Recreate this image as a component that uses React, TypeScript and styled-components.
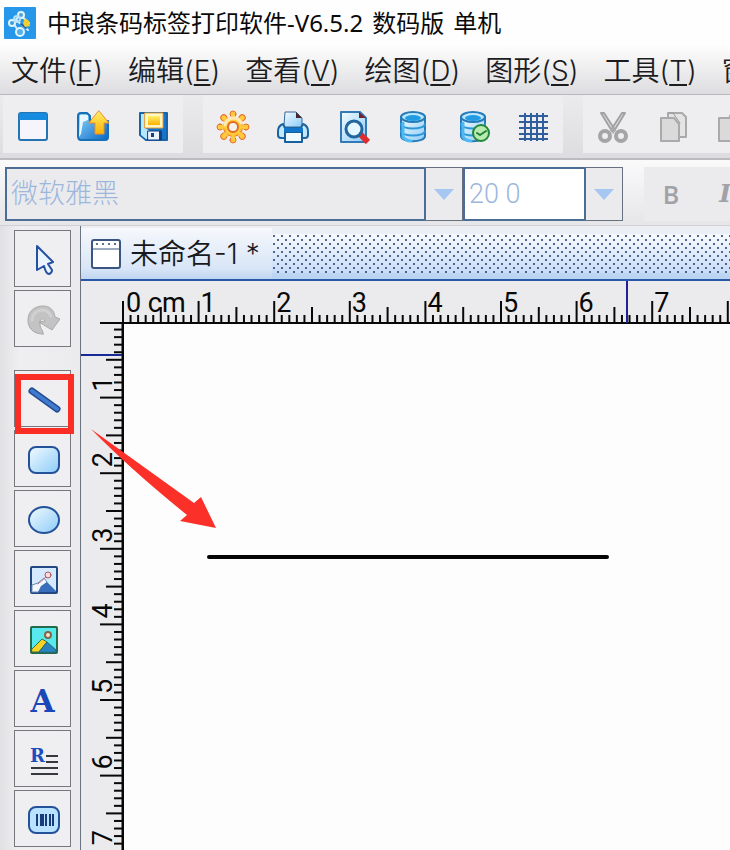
import React, { useEffect, useState } from "react";
import styled, { createGlobalStyle } from "styled-components";

const cjk = '"Noto Sans CJK SC", sans-serif';

const GlobalStyle = createGlobalStyle`
  *, *::before, *::after { box-sizing: border-box; }
  body { margin: 0; background: #ebeaec; overflow: hidden; }
  button, select { margin: 0; padding: 0; border: 0; background: none; color: inherit; font: inherit; }
  svg { display: block; }
`;

const Window = styled.div`
  display: flex;
  flex-direction: column;
  height: 100vh;
  overflow: hidden;
  color: #111;
  background: #ebeaec;
  font-family: "Liberation Sans", ${cjk};
`;

const TitleBar = styled.header`
  display: flex;
  flex: none;
  align-items: center;
  gap: 11px;
  height: 46px;
  padding: 0 0 0 4px;
  background: #fefefe;
`;

const Title = styled.h1`
  display: flex;
  gap: 9px;
  margin: 0;
  color: #0a0a0a;
  font: 400 24px/46px "Noto Sans", ${cjk};
  white-space: nowrap;
`;

const MenuBar = styled.nav`
  display: flex;
  flex: none;
  gap: 25px;
  height: 49px;
  padding-left: 11px;
  overflow: hidden;
  background: linear-gradient(#fdfdfd, #dddcdf);
  border-bottom: 1px solid #b9b9bd;
`;

const MenuButton = styled.button`
  flex: none;
  color: #1c1c1e;
  font: 350 28px/50px Inter, ${cjk};
  white-space: nowrap;
`;

const Key = styled.span`
  text-decoration: underline;
  text-decoration-thickness: 2px;
  text-underline-offset: 3px;
`;

const ToolBar = styled.div`
  display: flex;
  flex: none;
  gap: 20px;
  height: 65px;
  padding: 0 0 5px 3px;
  overflow: hidden;
  background: linear-gradient(#ebeaec, #dddde0);
  border-bottom: 2px solid #bcbcc0;
`;

const ToolGroup = styled.div`
  display: flex;
  flex: none;
  background: #eeedef;
`;

const ToolButton = styled.button`
  display: grid;
  place-items: center;
  flex: none;
  width: 60px;
  padding-top: 6px;
`;

const FormatBar = styled.div`
  display: flex;
  flex: none;
  height: 66px;
  padding: 7px 0 4px 5px;
  overflow: hidden;
  background: linear-gradient(#fafafb, #e6e6e9);
  border-bottom: 1px solid #d0d0d4;
`;

const Combo = styled.div<{ $field: number }>`
  display: grid;
  flex: none;
  grid-template-columns: ${(p) => p.$field}px 39px;
  height: 54px;
`;

const Select = styled.select<{ $fill: string }>`
  grid-area: 1 / 1 / 2 / 3;
  appearance: none;
  padding-left: 4px;
  color: #9db7dc;
  background: ${(p) => p.$fill};
  border: 2px solid #4b6d96;
  border-radius: 0;
  font: 300 27px/50px Roboto, "Noto Sans CJK SC", sans-serif;
`;

const Arrow = styled.span`
  grid-area: 1 / 2 / 2 / 3;
  display: grid;
  place-items: center;
  background: #ebebed;
  border: 1px solid #66717f;
  border-left: 2px solid #4b6d96;
  pointer-events: none;
`;

const StyleGroup = styled.div`
  display: flex;
  flex: none;
  height: 54px;
  margin-left: 21px;
  background: #ebeaec;
`;

const StyleButton = styled.button<{ $italic?: boolean }>`
  width: 54px;
  color: #a2a2a6;
  font: ${(p) => (p.$italic ? 'italic 700 25px/54px "DejaVu Serif"' : '600 25px/54px "Open Sans"')}, serif;
`;

const Workspace = styled.div`
  position: relative;
  display: flex;
  flex: 1;
  min-height: 0;
`;

const Palette = styled.aside`
  display: flex;
  flex: none;
  flex-direction: column;
  gap: 3px;
  width: 80px;
  padding: 4px 0 0 14px;
  background: linear-gradient(90deg, #e1e1e4, #efeef0 20px, #ebeaec);
`;

const PaletteButton = styled.button`
  position: relative;
  display: grid;
  place-items: center;
  flex: none;
  width: 57px;
  height: 57px;
  background: #efeef0;
  border: 1px solid #77787c;
`;

const Separator = styled.hr`
  flex: none;
  width: 57px;
  height: 17px;
  margin: 0;
  border: 0;
`;

const Highlight = styled.span`
  position: absolute;
  z-index: 1;
  top: 3px;
  left: 0;
  width: 59px;
  height: 60px;
  border: 6px solid #fa2e25;
`;

const BoldLetter = styled.span`
  padding-top: 4px;
  color: #1b48b8;
  font: 700 31px/50px "DejaVu Serif", serif;
`;

const Document = styled.main`
  display: flex;
  flex: 1;
  flex-direction: column;
  min-width: 0;
  border-left: 1px solid #6a7480;
`;

const TabStrip = styled.div`
  display: flex;
  flex: none;
  height: 55px;
  padding-top: 2px;
  background: linear-gradient(#eeeef2, #e8effb 12px, #b9d2f2);
  border-bottom: 2px solid #2858a6;
`;

const Tab = styled.button`
  display: flex;
  flex: none;
  align-items: center;
  width: 191px;
  padding-left: 9px;
  color: #18191c;
  background: linear-gradient(#f6f8fc, #d9e6f7 40px, #c0d6f3);
  font: 350 28px/50px Inter, ${cjk};
  white-space: nowrap;
`;

const TabText = styled.span`
  margin: 0 8px;
`;

const Dots = styled.div`
  flex: 1;
  margin: 6px 0 6px;
  background:
    radial-gradient(circle at 2px 2px, #4c6690 1px, transparent 1px) 0 0 / 8px 8px,
    radial-gradient(circle at 6px 6px, #4c6690 1px, transparent 1px) 0 0 / 8px 8px,
    linear-gradient(#f8fafe, #c8dcf7);
`;

const TopRuler = styled.div`
  flex: none;
  height: 43px;
  overflow: hidden;
`;

const Body = styled.div`
  display: flex;
  flex: 1;
  min-height: 0;
`;

const SideRuler = styled.div`
  flex: none;
  width: 43px;
  overflow: hidden;
`;

const Canvas = styled.div`
  position: relative;
  flex: 1;
  background: #fdfdfd;
`;

const DrawnLine = styled.svg`
  position: absolute;
  top: 231px;
  left: 83px;
`;

const Pointer = styled.svg`
  position: absolute;
  top: 201px;
  left: 90px;
  pointer-events: none;
`;

const CM = 75.6;
const rulerFont = "Roboto, sans-serif";

function useWindowSize() {
  const read = () => ({ width: window.innerWidth, height: window.innerHeight });
  const [size, setSize] = useState(read);
  useEffect(() => {
    const update = () => setSize(read());
    window.addEventListener("resize", update);
    return () => window.removeEventListener("resize", update);
  }, []);
  return size;
}

const range = (count: number) => Array.from({ length: Math.max(0, count) }, (_, i) => i);

const ticks = (length: number) =>
  range(Math.ceil((length * 10) / CM)).map((i) => ({
    at: (i * CM) / 10,
    size: i % 10 === 0 ? 22 : i % 5 === 0 ? 16 : 8,
  }));

function HorizontalRuler({ length }: { length: number }) {
  return (
    <svg width="100%" height="43" aria-hidden="true">
      <g stroke="#080808" strokeWidth="2">
        <path d={`M19 42H${length + 43}`} />
        {ticks(length).map((t) => (
          <path key={t.at} d={`M${42 + t.at} ${42 - t.size}V42`} />
        ))}
      </g>
      <g fill="#080808" fontFamily={rulerFont} fontSize="27">
        <text x="45" y="31">0 cm</text>
        {range(Math.floor((length - 20) / CM)).map((i) => (
          <text key={i} x={44 + (i + 1) * CM} y="31">{i + 1}</text>
        ))}
      </g>
      <path d="M546 0V42" stroke="#20209a" strokeWidth="2" />
    </svg>
  );
}

function VerticalRuler({ length }: { length: number }) {
  return (
    <svg width="43" height={length} aria-hidden="true">
      <g stroke="#080808" strokeWidth="2">
        <path d={`M42 0V${length}`} strokeWidth="3" />
        {ticks(length).slice(1).map((t) => (
          <path key={t.at} d={`M${41 - t.size} ${t.at - 2}H42`} />
        ))}
      </g>
      <g fill="#080808" fontFamily={rulerFont} fontSize="27">
        {range(Math.floor((length + 8) / CM)).map((i) => (
          <text key={i} transform={`translate(31 ${(i + 1) * CM - 8}) rotate(-90)`}>{i + 1}</text>
        ))}
      </g>
      <path d="M0 31H41" stroke="#182a98" strokeWidth="2" />
    </svg>
  );
}

const Icon = ({ children, size = 34 }: { children: React.ReactNode; size?: number }) => (
  <svg width={size} height={size} viewBox={`0 0 ${size} ${size}`} fill="none" strokeLinejoin="round" strokeLinecap="round" aria-hidden="true">
    {children}
  </svg>
);

const Definitions = styled.svg`
  position: absolute;
`;

const Gradients = () => (
  <Definitions width="0" height="0" aria-hidden="true">
    <defs>
      <linearGradient id="sky" x1="0" y1="0" x2="1" y2="1">
        <stop stopColor="#f2fbff" />
        <stop offset="1" stopColor="#8ccbf8" />
      </linearGradient>
      <linearGradient id="deep" x1="0" y1="0" x2="1" y2="1">
        <stop stopColor="#8ed6fb" />
        <stop offset="1" stopColor="#0766c4" />
      </linearGradient>
      <linearGradient id="gold" x1="0" y1="0" x2="0" y2="1">
        <stop stopColor="#fff06a" />
        <stop offset="1" stopColor="#ffb000" />
      </linearGradient>
    </defs>
  </Definitions>
);

const Logo = () => (
  <Icon size={32}>
    <rect width="32" height="32" rx="1" fill="#2797ea" />
    <path d="M16 8 9 16l7 10M16 8l9 8M12 13l12 10" stroke="#d7efff" strokeWidth="2" />
    <circle cx="17" cy="8" r="3" fill="#579fc9" stroke="#e2f5ff" strokeWidth="2" />
    <circle cx="8" cy="16" r="3" fill="#3c9cd8" stroke="#e2f5ff" strokeWidth="2" />
    <circle cx="16" cy="25" r="4" fill="#55b1e8" stroke="#e2f5ff" strokeWidth="2" />
    <circle cx="13" cy="12" r="3" stroke="#b5e1fb" strokeWidth="2" />
    <path d="m17 17 5 4" stroke="#20639e" strokeWidth="2" />
    <path d="m21 11 4 3 1 5-5 1-2-4z" fill="#f5cd35" />
  </Icon>
);

const NewWindow = () => (
  <Icon>
    <rect x="3" y="3" width="28" height="27" rx="2" fill="#f5f5fb" stroke="#2474b4" strokeWidth="2" />
    <path d="M3 10V5q0-2 2-2h24q2 0 2 2v5z" fill="#168be0" />
  </Icon>
);

const OpenFolder = () => (
  <Icon>
    <path d="M2 6q0-3 3-3h6l3 3v5h18v16q0 3-3 3H5q-3 0-3-4z" fill="url(#deep)" stroke="#1670b6" strokeWidth="2" />
    <path d="M4 5h8v5l-5 2-2 12-2 3z" fill="#e5f7ff" />
    <path d="m23 1 10 12h-5v11h-9V13h-6z" fill="url(#gold)" stroke="#f08a2c" />
  </Icon>
);

const Floppy = () => (
  <Icon>
    <path d="M4 3h27v27H10l-6-5z" fill="#1375cb" stroke="#1765a8" strokeWidth="2" />
    <path d="M5 4h4v14l5 3v8h-4l-5-4z" fill="#b5e7ff" />
    <path d="M9 3h18v15H9z" fill="#fff8c3" stroke="#ed9b35" />
    <path d="M12 6h12v9H12z" fill="url(#gold)" />
    <path d="M12 21h13v9H12z" fill="#eaf3fa" stroke="#143e80" />
    <path d="M15 23h3v4h-3z" fill="#173d80" />
    <path d="M23 21h3v9h-3z" fill="#123f80" />
  </Icon>
);

const Tooth = styled.g<{ $turn: number }>`
  transform: rotate(${(p) => p.$turn}deg);
  transform-origin: 17px 17px;
`;

const Gear = () => (
  <Icon>
    {range(8).map((i) => (
      <Tooth key={i} $turn={i * 45}>
        <circle cx="17" cy="4" r="3" fill="#ffc83a" stroke="#e8702a" />
        <path d="M15 5h4v5h-4z" fill="#ffc83a" />
      </Tooth>
    ))}
    <circle cx="17" cy="17" r="10" fill="#e97a28" />
    <circle cx="17" cy="17" r="9" fill="#ffc832" />
    {range(8).map((i) => (
      <Tooth key={i} $turn={i * 45}>
        <path d="M17 4v7" stroke="#ffcb3d" strokeWidth="3" />
      </Tooth>
    ))}
    <path d="M9 15q1-6 8-7 7 1 8 5" stroke="#ffe9b4" strokeWidth="3" />
    <circle cx="17" cy="17" r="5" fill="#f4f1ef" stroke="#e36c25" strokeWidth="2" />
  </Icon>
);

const Printer = () => (
  <Icon>
    <path d="m8 15 1-13h11l6 6v9H8z" fill="url(#sky)" stroke="#38689c" />
    <path d="M20 2v6h6z" fill="#472832" />
    <path d="M7 14q-5 2-5 7v4q0 3 3 3h24q3 0 3-3v-4q0-5-5-7l-2 4H9z" fill="#c3e8fc" stroke="#1d659f" strokeWidth="2" />
    <path d="M9 18h17v6H9z" fill="#087ed8" />
    <path d="M9 22h17v10H9z" fill="#eefaff" stroke="#16609f" strokeWidth="2" />
    <path d="M8 18h19v4H8z" fill="#1275cc" />
  </Icon>
);

const Preview = () => (
  <Icon>
    <path d="M5 2h19l6 6v24H5z" fill="url(#sky)" stroke="#3279b6" strokeWidth="2" />
    <path d="M23 2v6h7z" fill="#74202c" />
    <path d="m24 24 8 8" stroke="#df2c2c" strokeWidth="6" strokeLinecap="butt" />
    <circle cx="18" cy="19" r="8" fill="#e6f8ff" stroke="#21669e" strokeWidth="3" />
  </Icon>
);

const DbShape = () => (
  <>
    <path d="M5 7v19c0 7 24 7 24 0V7z" fill="url(#sky)" stroke="#267bb8" strokeWidth="2" />
    <path d="M5 14c0 6 24 6 24 0M5 21c0 6 24 6 24 0" stroke="#2c98da" strokeWidth="2" />
    <path d="M7 13v14q3 4 8 4" stroke="#4db8f1" strokeWidth="3" />
    <ellipse cx="17" cy="7" rx="12" ry="5" fill="#b9e8ff" stroke="#267bb8" strokeWidth="2" />
    <ellipse cx="17" cy="8" rx="8" ry="3" fill="#239be2" />
  </>
);

const Database = () => <Icon><DbShape /></Icon>;

const DatabaseCheck = () => (
  <Icon>
    <DbShape />
    <circle cx="25" cy="23" r="8" fill="#b9eaaf" stroke="#21883d" strokeWidth="2" />
    <path d="m21 23 3 2 6-4" stroke="#208238" strokeWidth="2" />
  </Icon>
);

const Grid = () => (
  <Icon>
    <path d="M3 6h29M3 12h29M3 18h29M3 24h29M3 29h29M9 3v28M15 3v28M21 3v28M27 3v28" stroke="#315f9e" strokeWidth="2" strokeLinecap="butt" />
  </Icon>
);

const Scissors = () => (
  <Icon>
    <path d="M5 3 8 3l11 17-3 1zM29 3l-3 0-11 17 3 1z" fill="#e6e6e8" stroke="#a1a1a4" strokeWidth="2" />
    <circle cx="9" cy="26" r="5" stroke="#a5a5a7" strokeWidth="4" />
    <circle cx="25" cy="26" r="5" stroke="#a5a5a7" strokeWidth="4" />
    <path d="m14 20 3-3 3 3-3 4z" fill="#aaa" />
  </Icon>
);

const Pages = () => (
  <Icon>
    <path d="M12 3h14l4 4v20H12z" fill="#e4e4e4" stroke="#aaa" strokeWidth="2" />
    <path d="M5 8h13l5 6v17H5z" fill="#dadadb" stroke="#aaa" strokeWidth="2" />
    <path d="M13 3h4l7 10" stroke="#999" />
  </Icon>
);

const Clipboard = () => (
  <Icon>
    <path d="M3 8h24v23H3z" fill="#dadadb" stroke="#aaa" strokeWidth="2" />
    <path d="M13 8q0-5 5-5v5z" fill="#c9c9c9" stroke="#aaa" />
  </Icon>
);

const Triangle = () => (
  <svg width="20" height="11" aria-hidden="true"><path d="M0 0h20L10 11z" fill="#a6c7f1" /></svg>
);

const Cursor = () => (
  <Icon>
    <path d="m11 4 16 16-5 2 4 6q0 3-3 4-3 0-5-8l-7 4z" fill="#e9f4ff" stroke="#2450a0" strokeWidth="2" />
  </Icon>
);

const Rotate = () => (
  <Icon>
    <path d="M17 32C7 32 2 26 2 18 2 9 9 4 17 4c7 0 11 4 12 11l5 2-8 11-13-8 6-1c-2-4-5-2-5 3 0 5 4 7 3 10z" fill="#c3c3c4" stroke="#a9a9aa" />
    <path d="M6 18q1-9 10-10 6 0 9 6" stroke="#d1d1d1" strokeWidth="3" />
  </Icon>
);

const LineIcon = () => (
  <Icon size={36}>
    <path d="m7 10 25 18" stroke="#244b91" strokeWidth="7" />
    <path d="m7 10 25 18" stroke="#417bd0" strokeWidth="4" />
  </Icon>
);

const RoundBox = () => (
  <Icon>
    <rect x="3" y="5" width="30" height="26" rx="7" fill="url(#sky)" stroke="#24529a" strokeWidth="2" />
  </Icon>
);

const Oval = () => (
  <Icon>
    <ellipse cx="18" cy="18" rx="15" ry="13" fill="url(#sky)" stroke="#24529a" strokeWidth="2" />
  </Icon>
);

const PhotoOutline = () => (
  <Icon>
    <rect x="5" y="5" width="26" height="26" rx="1" fill="#d5e9ff" stroke="#244884" strokeWidth="2" />
    <path d="m6 28 0-5 6-2 6-5 3 4-8 10H6z" fill="#f3f8ff" stroke="#6d8ab2" />
    <path d="m12 30 3-6 6-4 9 9v1z" fill="#396fba" />
    <circle cx="22" cy="13" r="3" fill="#f5dedc" stroke="#b75158" />
    <path d="m20 15-8 7" stroke="#b77886" />
  </Icon>
);

const Photo = () => (
  <Icon>
    <rect x="5" y="5" width="26" height="26" rx="1" fill="#58e9ed" stroke="#236b4b" strokeWidth="2" />
    <path d="m6 27 10-10 5 3-8 10H6z" fill="#f5d427" stroke="#436b3c" />
    <path d="m13 30 8-10 9 8v2z" fill="#2784be" stroke="#256578" />
    <circle cx="22" cy="13" r="3" fill="#fce3c5" stroke="#80654f" strokeWidth="2" />
  </Icon>
);

const RichText = () => (
  <Icon>
    <text x="4" y="20" fill="#1d4ebe" fontFamily="DejaVu Serif, serif" fontWeight="700" fontSize="18">R</text>
    <path d="M20 14h12M20 20h12M5 26h27M5 32h27" stroke="#38393d" strokeWidth="2" strokeLinecap="butt" />
  </Icon>
);

const Barcode = () => (
  <Icon>
    <rect x="3" y="5" width="30" height="26" rx="7" fill="#b8e2ff" stroke="#24529a" strokeWidth="2" />
    <path d="M11 12v12M20 12v12M24 12v12M27 12v12" stroke="#173c7c" strokeWidth="2" strokeLinecap="butt" />
    <path d="M16 12v12" stroke="#173c7c" strokeWidth="4" strokeLinecap="butt" />
  </Icon>
);

const PageIcon = () => (
  <Icon size={32}>
    <rect x="2" y="2" width="28" height="28" rx="2" fill="#fff" stroke="#3a5680" strokeWidth="2" />
    <path d="M3 11h26" stroke="#3a5680" strokeWidth="1" />
    <path d="M6 6h23" stroke="#60718c" strokeWidth="2" strokeDasharray="2 4" strokeLinecap="butt" />
  </Icon>
);

const menus = [["文件", "F"], ["编辑", "E"], ["查看", "V"], ["绘图", "D"], ["图形", "S"], ["工具", "T"], ["窗口", "W"]];

const toolGroups: [string, React.ComponentType][][] = [
  [["新建", NewWindow], ["打开", OpenFolder], ["保存", Floppy]],
  [["设置", Gear], ["打印", Printer], ["打印预览", Preview], ["数据库", Database], ["数据库连接", DatabaseCheck], ["网格", Grid]],
  [["剪切", Scissors], ["复制", Pages], ["粘贴", Clipboard]],
];

const Letter = () => <BoldLetter>A</BoldLetter>;

const shapeTools: [string, React.ComponentType][] = [
  ["线段", LineIcon], ["圆角矩形", RoundBox], ["椭圆", Oval], ["矢量图", PhotoOutline],
  ["图片", Photo], ["文字", Letter], ["富文本", RichText], ["条形码", Barcode],
];

export default function App() {
  const { width, height } = useWindowSize();
  return (
    <Window>
      <GlobalStyle />
      <Gradients />
      <TitleBar>
        <Logo />
        <Title>
          <span>中琅条码标签打印软件-V6.5.2</span>
          <span>数码版</span>
          <span>单机</span>
        </Title>
      </TitleBar>
      <MenuBar>
        {menus.map(([label, key]) => (
          <MenuButton key={label}>{label}(<Key>{key}</Key>)</MenuButton>
        ))}
      </MenuBar>
      <ToolBar>
        {toolGroups.map((group, i) => (
          <ToolGroup key={i}>
            {group.map(([label, Glyph]) => (
              <ToolButton key={label} aria-label={label}><Glyph /></ToolButton>
            ))}
          </ToolGroup>
        ))}
      </ToolBar>
      <FormatBar>
        <Combo $field={419}>
          <Select $fill="#ebebed" aria-label="字体"><option>微软雅黑</option></Select>
          <Arrow><Triangle /></Arrow>
        </Combo>
        <Combo $field={121}>
          <Select $fill="#fff" aria-label="字号"><option>20 0</option></Select>
          <Arrow><Triangle /></Arrow>
        </Combo>
        <StyleGroup>
          <StyleButton aria-label="粗体">B</StyleButton>
          <StyleButton $italic aria-label="斜体">I</StyleButton>
        </StyleGroup>
      </FormatBar>
      <Workspace>
        <Palette>
          <PaletteButton aria-label="选择"><Cursor /></PaletteButton>
          <PaletteButton aria-label="旋转"><Rotate /></PaletteButton>
          <Separator />
          {shapeTools.map(([label, Glyph], i) => (
            <PaletteButton key={label} aria-label={label}>
              <Glyph />
              {i === 0 && <Highlight />}
            </PaletteButton>
          ))}
        </Palette>
        <Document>
          <TabStrip>
            <Tab><PageIcon /><TabText>未命名-1</TabText>*</Tab>
            <Dots />
          </TabStrip>
          <TopRuler><HorizontalRuler length={width - 122} /></TopRuler>
          <Body>
            <SideRuler><VerticalRuler length={height - 324} /></SideRuler>
            <Canvas>
              <DrawnLine width="403" height="5" aria-hidden="true">
                <path d="M2 2H400" stroke="#050505" strokeWidth="4" strokeLinecap="round" />
              </DrawnLine>
            </Canvas>
          </Body>
        </Document>
        <Pointer width="128" height="104" aria-hidden="true">
          <path d="M1 2 104 76l7-6 15 31-36-7 7-6Q40 42 1 2z" fill="#fb3129" />
        </Pointer>
      </Workspace>
    </Window>
  );
}
